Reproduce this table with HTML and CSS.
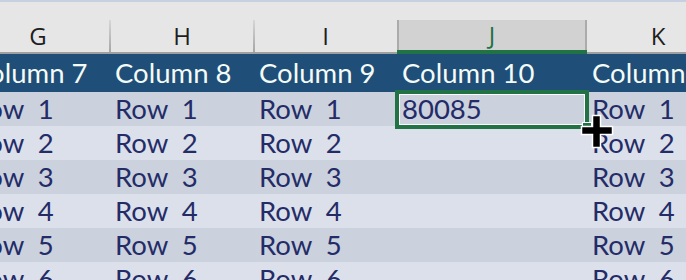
FILE: index.html
```html
<!DOCTYPE html>
<html>
<head>
<meta charset="utf-8">
<link rel="stylesheet" href="styles.css">
</head>
<body>
<div class="app">
  <div class="topline"></div>
  <div class="colbar">
    <div class="grid colheads">
      <div class="ch sep">G</div>
      <div class="ch sep">H</div>
      <div class="ch">I</div>
      <div class="ch sel">J</div>
      <div class="ch sep">K</div>
    </div>
  </div>
  <div class="sheet">
    <div class="grid row head">
      <div class="cell">Column 7</div><div class="cell">Column 8</div><div class="cell">Column 9</div><div class="cell">Column 10</div><div class="cell">Column 11</div>
    </div>
    <div class="grid row odd">
      <div class="cell">Row  1</div><div class="cell">Row  1</div><div class="cell">Row  1</div><div class="cell">80085</div><div class="cell">Row  1</div>
    </div>
    <div class="grid row even">
      <div class="cell">Row  2</div><div class="cell">Row  2</div><div class="cell">Row  2</div><div class="cell"></div><div class="cell">Row  2</div>
    </div>
    <div class="grid row odd">
      <div class="cell">Row  3</div><div class="cell">Row  3</div><div class="cell">Row  3</div><div class="cell"></div><div class="cell">Row  3</div>
    </div>
    <div class="grid row even">
      <div class="cell">Row  4</div><div class="cell">Row  4</div><div class="cell">Row  4</div><div class="cell"></div><div class="cell">Row  4</div>
    </div>
    <div class="grid row odd">
      <div class="cell">Row  5</div><div class="cell">Row  5</div><div class="cell">Row  5</div><div class="cell"></div><div class="cell">Row  5</div>
    </div>
    <div class="grid row even">
      <div class="cell">Row  6</div><div class="cell">Row  6</div><div class="cell">Row  6</div><div class="cell"></div><div class="cell">Row  6</div>
    </div>
  </div>
  <div class="selection"></div>
  <div class="handle"></div>
  <svg class="cursor" width="34" height="36" viewBox="0 0 34 36">
    <path d="M11 1 H19 V12 H31 V20 H19 V33 H11 V20 H0 V12 H11 Z" transform="translate(1.5 1.5)" fill="#000" stroke="#fff" stroke-width="1.5"/>
  </svg>
</div>
</body>
</html>
```

FILE: styles.css
```css
html, body {
  margin: 0;
  padding: 0;
}
body {
  width: 686px;
  height: 280px;
  overflow: hidden;
  background: #dce0ea;
}
.app {
  position: relative;
  width: 686px;
  height: 280px;
  overflow: hidden;
}
.topline {
  height: 2px;
  background: #c7d0e0;
}
.colbar {
  height: 52px;
  box-sizing: border-box;
  padding-top: 18px;
  background: #e6e6e6;
}
.grid {
  display: grid;
  grid-template-columns: 144px 144px 143px 190px 142px;
  margin-left: -34px;
  width: 763px;
}
.ch {
  position: relative;
  height: 34px;
  box-sizing: border-box;
  border-bottom: 2px solid #9f9f9f;
  font-family: "Open Sans", "Noto Sans", sans-serif;
  font-size: 24px;
  line-height: 32px;
  color: #1e1e1e;
  text-align: center;
}
.ch.sep::after {
  content: "";
  position: absolute;
  right: -1px;
  top: 0;
  bottom: 0;
  width: 2px;
  background: linear-gradient(#d6d6d6, #a6a6a6);
}
.ch.sel {
  background: #d2d2d2;
  border-bottom: 4px solid #217346;
  box-shadow: inset 2px 0 #ababab, inset -2px 0 #ababab;
  color: #217346;
  line-height: 30px;
}
.sheet {
  font-family: "Lato", "Liberation Sans", sans-serif;
  font-size: 27.5px;
}
.row {
  height: 34px;
}
.cell {
  padding-left: 5px;
  white-space: pre;
  overflow: hidden;
  line-height: 34px;
  color: #242c68;
}
.row.head {
  height: 38px;
  background: #1f4e78;
}
.row.head .cell {
  line-height: 38px;
  color: #f4fbf6;
}
.row.odd {
  background: #cbd2de;
}
.row.even {
  background: #dce0ea;
}
.selection {
  position: absolute;
  left: 395px;
  top: 90px;
  width: 194px;
  height: 39px;
  box-sizing: border-box;
  border: 4px solid #217346;
  box-shadow: inset 0 0 0 1px #ffffff;
}
.handle {
  position: absolute;
  left: 582px;
  top: 122px;
  width: 8px;
  height: 8px;
  background: #217346;
  border: 1px solid #ffffff;
}
.cursor {
  position: absolute;
  left: 580px;
  top: 113px;
}
```
